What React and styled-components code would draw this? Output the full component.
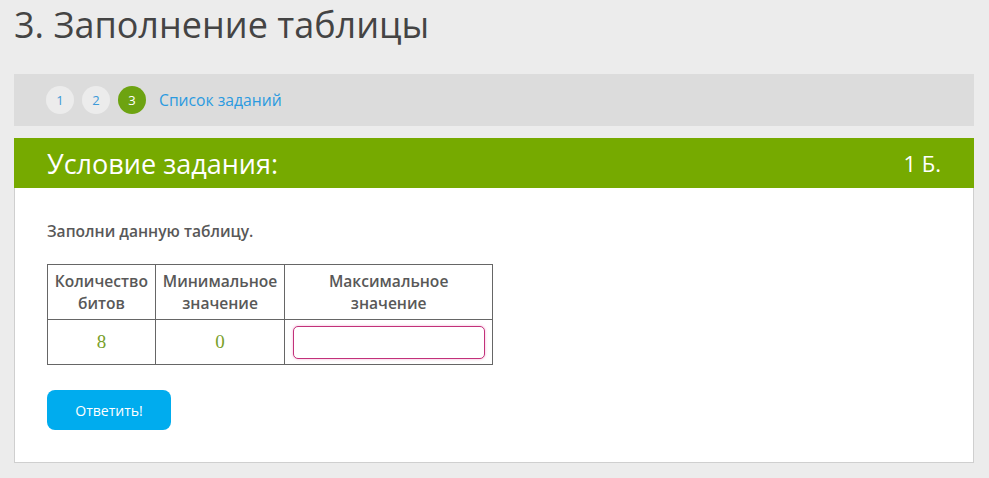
import React from 'react';
import styled, { createGlobalStyle } from 'styled-components';

const Global = createGlobalStyle`
  body {
    margin: 0;
    background: #ececec;
    font-family: "Open Sans", "Noto Sans", sans-serif;
  }
`;

const Page = styled.div`
  padding: 0 15px 0 14px;
  width: 960px;
`;

const Title = styled.h1`
  margin: 0;
  padding: 2px 0 26px;
  font-size: 36px;
  font-weight: 400;
  color: #444;
  line-height: 46px;
`;

const NavBar = styled.div`
  height: 52px;
  background: #dcdcdc;
  display: flex;
  align-items: center;
  gap: 8px;
  padding-left: 32px;
`;

const Step = styled.span`
  width: 28px;
  height: 28px;
  border-radius: 50%;
  display: flex;
  align-items: center;
  justify-content: center;
  font-size: 13px;
  background: ${p => (p.$active ? '#6da311' : '#ececec')};
  color: ${p => (p.$active ? '#fff' : '#3d9ad8')};
`;

const NavLink = styled.a`
  margin-left: 5px;
  font-size: 15.7px;
  color: #2a9ae0;
  text-decoration: none;
`;

const Card = styled.div`
  margin-top: 12px;
  background: #fff;
  border: 1px solid #cfcfcf;
  border-top: none;
`;

const CardHeader = styled.div`
  height: 50px;
  margin: 0 -1px;
  background: #76aa00;
  color: #fff;
  display: flex;
  align-items: center;
  justify-content: space-between;
  padding: 0 33px;
  font-size: 27px;
`;

const Points = styled.span`
  font-size: 22px;
`;

const CardBody = styled.div`
  padding: 32px;
`;

const Prompt = styled.p`
  margin: 0 0 22px;
  font-size: 15.6px;
  font-weight: 600;
  color: #585858;
  line-height: 22px;
`;

const Table = styled.table`
  border-collapse: collapse;
  width: 446px;
  font-size: 15.6px;
  color: #585858;
`;

const Th = styled.th`
  border: 1px solid #666;
  font-weight: 600;
  height: 54px;
  line-height: 22px;
  padding: 0 2px;
  width: ${p => p.$w}px;
`;

const Td = styled.td`
  border: 1px solid #666;
  height: 44px;
  text-align: center;
  padding: 0;
`;

const Num = styled.span`
  font-family: "Liberation Serif", "DejaVu Serif", serif;
  font-size: 19px;
  color: #78a02a;
`;

const Input = styled.input`
  display: block;
  box-sizing: border-box;
  width: 192px;
  height: 33px;
  margin: 0 auto;
  border: 1px solid #c2317a;
  border-radius: 5px;
  box-shadow: 0 0 3px #f3b3d4;
  outline: none;
`;

const Button = styled.button`
  margin-top: 25px;
  width: 124px;
  height: 40px;
  border: none;
  border-radius: 8px;
  background: #00acee;
  color: #fff;
  font-family: "Open Sans", sans-serif;
  font-size: 14px;
`;

export default function App() {
  return (
    <Page>
      <Global />
      <Title>3. Заполнение таблицы</Title>
      <NavBar>
        <Step>1</Step>
        <Step>2</Step>
        <Step $active>3</Step>
        <NavLink href="#">Список заданий</NavLink>
      </NavBar>
      <Card>
        <CardHeader>
          <span>Условие задания:</span>
          <Points>1 Б.</Points>
        </CardHeader>
        <CardBody>
          <Prompt>Заполни данную таблицу.</Prompt>
          <Table>
            <thead>
              <tr>
                <Th $w={107}>Количество битов</Th>
                <Th $w={129}>Минимальное значение</Th>
                <Th $w={209}>Максимальное<br />значение</Th>
              </tr>
            </thead>
            <tbody>
              <tr>
                <Td><Num>8</Num></Td>
                <Td><Num>0</Num></Td>
                <Td><Input /></Td>
              </tr>
            </tbody>
          </Table>
          <Button>Ответить!</Button>
        </CardBody>
      </Card>
    </Page>
  );
}
